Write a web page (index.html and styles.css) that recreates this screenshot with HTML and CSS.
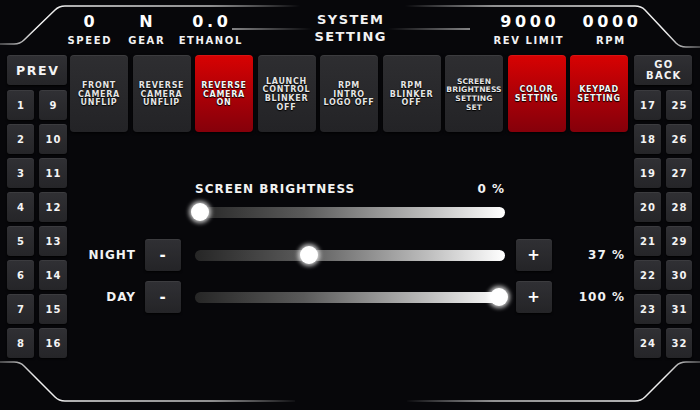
FILE: index.html
```html
<!DOCTYPE html>
<html>
<head>
<meta charset="utf-8">
<link rel="stylesheet" href="styles.css">
</head>
<body>
<div class="screen">
  <svg class="frame" width="700" height="410" viewBox="0 0 700 410">
    <defs>
      <linearGradient id="gl" gradientUnits="userSpaceOnUse" x1="0" y1="0" x2="300" y2="0">
        <stop offset="0" stop-color="#fff" stop-opacity="0.35"/>
        <stop offset="0.12" stop-color="#fff" stop-opacity="0.95"/>
        <stop offset="0.7" stop-color="#ddd" stop-opacity="0.85"/>
        <stop offset="1" stop-color="#fff" stop-opacity="0"/>
      </linearGradient>
      <linearGradient id="gr" gradientUnits="userSpaceOnUse" x1="700" y1="0" x2="405" y2="0">
        <stop offset="0" stop-color="#fff" stop-opacity="0.35"/>
        <stop offset="0.12" stop-color="#fff" stop-opacity="0.95"/>
        <stop offset="0.7" stop-color="#ddd" stop-opacity="0.85"/>
        <stop offset="1" stop-color="#fff" stop-opacity="0"/>
      </linearGradient>
      <linearGradient id="sl" gradientUnits="userSpaceOnUse" x1="232" y1="0" x2="312" y2="0">
        <stop offset="0" stop-color="#fff" stop-opacity="1"/>
        <stop offset="1" stop-color="#fff" stop-opacity="0"/>
      </linearGradient>
      <linearGradient id="sr" gradientUnits="userSpaceOnUse" x1="470" y1="0" x2="388" y2="0">
        <stop offset="0" stop-color="#fff" stop-opacity="1"/>
        <stop offset="1" stop-color="#fff" stop-opacity="0"/>
      </linearGradient>
    </defs>
    <path d="M0,44 L14,44 Q20,44 24,40 L55,10 Q59,6 65,6 L300,6" fill="none" stroke="url(#gl)" stroke-width="1.5"/>
    <path d="M700,47 L686,47 Q680,47 676,43 L645,10 Q641,6 635,6 L405,6" fill="none" stroke="url(#gr)" stroke-width="1.5"/>
    <path d="M232,29 L312,29" fill="none" stroke="url(#sl)" stroke-width="1.2"/>
    <path d="M388,29 L470,29" fill="none" stroke="url(#sr)" stroke-width="1.2"/>
    <path d="M0,362 L14,362 Q20,362 24,366 L55,397 Q59,401 65,401 L295,401" fill="none" stroke="url(#gl)" stroke-width="1.5"/>
    <path d="M700,362 L686,362 Q680,362 676,366 L645,397 Q641,401 635,401 L407,401" fill="none" stroke="url(#gr)" stroke-width="1.5"/>
  </svg>

  <header class="top">
    <div class="stat speed"><div class="num">0</div><div class="cap">SPEED</div></div>
    <div class="stat gear"><div class="num">N</div><div class="cap">GEAR</div></div>
    <div class="stat ethanol"><div class="num">0.0</div><div class="cap">ETHANOL</div></div>
    <div class="title">SYSTEM<br>SETTING</div>
    <div class="stat rev"><div class="num">9000</div><div class="cap">REV LIMIT</div></div>
    <div class="stat rpm"><div class="num">0000</div><div class="cap">RPM</div></div>
  </header>

  <main class="body">
    <aside class="side side-left">
      <div class="key big">PREV</div>
      <div class="numgrid">
        <div class="key">1</div><div class="key">9</div>
        <div class="key">2</div><div class="key">10</div>
        <div class="key">3</div><div class="key">11</div>
        <div class="key">4</div><div class="key">12</div>
        <div class="key">5</div><div class="key">13</div>
        <div class="key">6</div><div class="key">14</div>
        <div class="key">7</div><div class="key">15</div>
        <div class="key">8</div><div class="key">16</div>
      </div>
    </aside>

    <section class="center">
      <div class="modes">
        <div class="mode">FRONT<br>CAMERA<br>UNFLIP</div>
        <div class="mode">REVERSE<br>CAMERA<br>UNFLIP</div>
        <div class="mode red">REVERSE<br>CAMERA<br>ON</div>
        <div class="mode">LAUNCH<br>CONTROL<br>BLINKER<br>OFF</div>
        <div class="mode">RPM<br>INTRO<br>LOGO OFF</div>
        <div class="mode">RPM<br>BLINKER<br>OFF</div>
        <div class="mode tight">SCREEN<br>BRIGHTNESS<br>SETTING<br>SET</div>
        <div class="mode red">COLOR<br>SETTING</div>
        <div class="mode red">KEYPAD<br>SETTING</div>
      </div>

      <div class="bright">
        <div class="brow head">
          <span>SCREEN BRIGHTNESS</span>
          <span>0 %</span>
        </div>
        <div class="brow main">
          <div class="track"><div class="knob" style="--p:0"></div></div>
        </div>
        <div class="brow ctl night">
          <span class="lbl">NIGHT</span>
          <div class="sq">-</div>
          <div class="track"><div class="knob" style="--p:0.365"></div></div>
          <div class="sq">+</div>
          <span class="val">37 %</span>
        </div>
        <div class="brow ctl day">
          <span class="lbl">DAY</span>
          <div class="sq">-</div>
          <div class="track"><div class="knob" style="--p:1"></div></div>
          <div class="sq">+</div>
          <span class="val">100 %</span>
        </div>
      </div>
    </section>

    <aside class="side side-right">
      <div class="key big two">GO<br>BACK</div>
      <div class="numgrid">
        <div class="key">17</div><div class="key">25</div>
        <div class="key">18</div><div class="key">26</div>
        <div class="key">19</div><div class="key">27</div>
        <div class="key">20</div><div class="key">28</div>
        <div class="key">21</div><div class="key">29</div>
        <div class="key">22</div><div class="key">30</div>
        <div class="key">23</div><div class="key">31</div>
        <div class="key">24</div><div class="key">32</div>
      </div>
    </aside>
  </main>
</div>
</body>
</html>
```

FILE: styles.css
```css
* { box-sizing: border-box; }

html, body {
  margin: 0;
  padding: 0;
  background: #07070a;
}

.screen {
  position: relative;
  width: 700px;
  height: 410px;
  overflow: hidden;
  background: #07070a;
  color: #fff;
  font-family: "DejaVu Sans", "Liberation Sans", sans-serif;
  font-weight: bold;
}

.frame {
  position: absolute;
  left: 0;
  top: 0;
  pointer-events: none;
}

/* ---------- header ---------- */
.top {
  display: flex;
  align-items: flex-start;
  height: 55px;
  padding-left: 60px;
}

.stat {
  text-align: center;
  padding-top: 14px;
}
.speed { width: 58px; }
.gear { width: 56px; }
.ethanol { width: 72px; }
.rev { width: 82px; margin-left: 82px; }
.rpm { width: 62px; margin-left: 10px; }

.num {
  font-size: 16px;
  line-height: 16px;
  letter-spacing: 3.6px;
  padding-left: 3.6px;
  color: #fff;
}

.cap {
  margin-top: 6px;
  font-size: 10px;
  line-height: 10px;
  letter-spacing: 1.6px;
  padding-left: 1.6px;
  color: #f2f2f2;
}

.title {
  width: 110px;
  margin-left: 49px;
  margin-top: 11px;
  text-align: center;
  font-size: 13px;
  line-height: 17px;
  letter-spacing: 1.4px;
  padding-left: 1.4px;
  color: #f2f2f2;
}

/* ---------- body ---------- */
.body {
  display: flex;
  align-items: flex-start;
  padding-left: 7px;
}

.side { width: 60px; }
.side-right { width: 58px; margin-left: 6px; }

.key {
  display: flex;
  align-items: center;
  justify-content: center;
  height: 30px;
  border-radius: 3px;
  background: linear-gradient(#303034, #252528);
  box-shadow: 0 1px 2px rgba(0,0,0,0.9), inset 0 1px 0 rgba(255,255,255,0.06);
  font-size: 10px;
  letter-spacing: 1.2px;
  padding-left: 1.2px;
  color: #f4f4f4;
  text-align: center;
}

.key.big {
  font-size: 12.5px;
  letter-spacing: 1.6px;
  padding-left: 1.6px;
}
.key.big.two {
  font-size: 10px;
  line-height: 11.5px;
  letter-spacing: 1.3px;
}

.numgrid {
  display: grid;
  grid-template-columns: 27px 28px;
  grid-auto-rows: 30px;
  column-gap: 5px;
  row-gap: 4px;
  margin-top: 5px;
}
.side-right .numgrid { grid-template-columns: 27px 26px; }

.center {
  width: 558px;
  margin-left: 3px;
}

.modes {
  display: grid;
  grid-template-columns: repeat(9, 58px);
  column-gap: 4.5px;
  height: 77px;
}

.mode {
  display: flex;
  align-items: center;
  justify-content: center;
  text-align: center;
  border-radius: 4px;
  background: linear-gradient(#2e2e31, #232326);
  box-shadow: 0 1px 3px rgba(0,0,0,0.9), inset 0 1px 0 rgba(255,255,255,0.07);
  font-size: 8px;
  line-height: 8.7px;
  letter-spacing: 0.7px;
  padding-top: 3px;
  color: #e4e4e4;
  text-shadow: 0 0 1px #000, 0 1px 1px #000;
  white-space: nowrap;
}

.mode.tight {
  font-size: 7.6px;
  letter-spacing: 0.1px;
}

.mode.red {
  background: linear-gradient(#d80202, #a10008 65%, #85000a);
  color: #f6f6f6;
}

/* ---------- brightness ---------- */
.bright {
  padding-top: 50px;
}

.brow {
  display: flex;
  align-items: center;
  font-size: 12px;
  line-height: 14px;
  letter-spacing: 1px;
  color: #f2f2f2;
}

.brow.head {
  width: 310px;
  margin-left: 125px;
  justify-content: space-between;
  height: 14px;
}

.brow.main {
  height: 18px;
  margin-top: 7px;
  margin-left: 125px;
}

.brow.ctl { height: 32px; }
.brow.night { margin-top: 18px; }
.brow.day { margin-top: 10px; }

.lbl {
  width: 66px;
  text-align: right;
  margin-right: 9px;
}

.sq {
  display: flex;
  align-items: center;
  justify-content: center;
  width: 36px;
  height: 32px;
  border-radius: 3px;
  background: linear-gradient(#303034, #242427);
  box-shadow: 0 1px 2px rgba(0,0,0,0.9), inset 0 1px 0 rgba(255,255,255,0.06);
  font-size: 15px;
  color: #fff;
}

.track {
  position: relative;
  width: 310px;
  height: 11px;
  border-radius: 6px;
  background: linear-gradient(to right, #262626 0%, #5a5a5a 35%, #bdbdbd 75%, #fff 100%);
}

.ctl .track {
  margin-left: 14px;
  margin-right: 11px;
}

.knob {
  position: absolute;
  top: -3.5px;
  left: calc(var(--p) * 299px - 4px);
  width: 18px;
  height: 18px;
  border-radius: 50%;
  background: #fff;
  box-shadow: 0 0 4px 2px rgba(255,255,255,0.75);
}

.val {
  flex: 1;
  text-align: right;
  padding-right: 3px;
}
```
